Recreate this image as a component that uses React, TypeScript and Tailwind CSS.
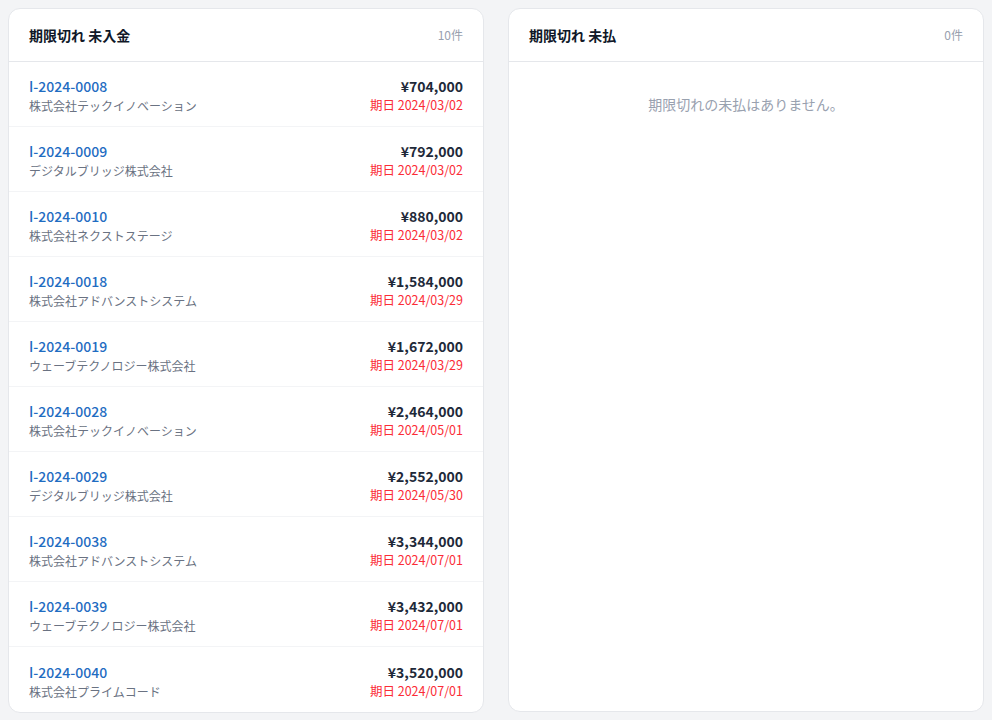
import React from "react";

type Invoice = {
  id: string;
  company: string;
  amount: string;
  due: string;
};

const receivables: Invoice[] = [
  { id: "I-2024-0008", company: "株式会社テックイノベーション", amount: "¥704,000", due: "2024/03/02" },
  { id: "I-2024-0009", company: "デジタルブリッジ株式会社", amount: "¥792,000", due: "2024/03/02" },
  { id: "I-2024-0010", company: "株式会社ネクストステージ", amount: "¥880,000", due: "2024/03/02" },
  { id: "I-2024-0018", company: "株式会社アドバンストシステム", amount: "¥1,584,000", due: "2024/03/29" },
  { id: "I-2024-0019", company: "ウェーブテクノロジー株式会社", amount: "¥1,672,000", due: "2024/03/29" },
  { id: "I-2024-0028", company: "株式会社テックイノベーション", amount: "¥2,464,000", due: "2024/05/01" },
  { id: "I-2024-0029", company: "デジタルブリッジ株式会社", amount: "¥2,552,000", due: "2024/05/30" },
  { id: "I-2024-0038", company: "株式会社アドバンストシステム", amount: "¥3,344,000", due: "2024/07/01" },
  { id: "I-2024-0039", company: "ウェーブテクノロジー株式会社", amount: "¥3,432,000", due: "2024/07/01" },
  { id: "I-2024-0040", company: "株式会社プライムコード", amount: "¥3,520,000", due: "2024/07/01" },
];

const font = { fontFamily: '"Noto Sans CJK JP", "Noto Sans", sans-serif' };

function CardHeader({ title, count }: { title: string; count: number }) {
  return (
    <div className="flex items-center justify-between border-b border-gray-200 px-5 py-4">
      <h2 className="text-[14px] font-bold leading-5 text-gray-900">{title}</h2>
      <span className="text-[12px] leading-5 text-gray-400">{count}件</span>
    </div>
  );
}

function InvoiceRow({ inv, last }: { inv: Invoice; last: boolean }) {
  return (
    <li
      className={`flex h-[65px] items-center justify-between px-5 ${
        last ? "" : "border-b border-gray-100"
      }`}
    >
      <div className="flex flex-col pt-[3px]">
        <a href="#" className="text-[14px] font-medium leading-[21px] text-[#1f6cc2]">
          {inv.id}
        </a>
        <span className="text-[12px] leading-[18px] text-gray-500">{inv.company}</span>
      </div>
      <div className="flex flex-col items-end pt-[1px]">
        <span className="text-[14px] font-bold leading-5 text-gray-800">{inv.amount}</span>
        <span className="text-[12.5px] leading-[17px] text-red-500">期日 {inv.due}</span>
      </div>
    </li>
  );
}

export default function App() {
  return (
    <div className="min-h-screen bg-gray-100 p-2" style={font}>
      <div className="grid grid-cols-2 items-start gap-6">
        <section className="overflow-hidden rounded-xl border border-gray-200 bg-white">
          <CardHeader title="期限切れ 未入金" count={receivables.length} />
          <ul>
            {receivables.map((inv, i) => (
              <InvoiceRow key={inv.id} inv={inv} last={i === receivables.length - 1} />
            ))}
          </ul>
        </section>
        <section className="flex h-[704px] flex-col overflow-hidden rounded-xl border border-gray-200 bg-white">
          <CardHeader title="期限切れ 未払" count={0} />
          <p className="pt-[32px] text-center text-[14px] leading-5 text-gray-400">
            期限切れの未払はありません。
          </p>
        </section>
      </div>
    </div>
  );
}
